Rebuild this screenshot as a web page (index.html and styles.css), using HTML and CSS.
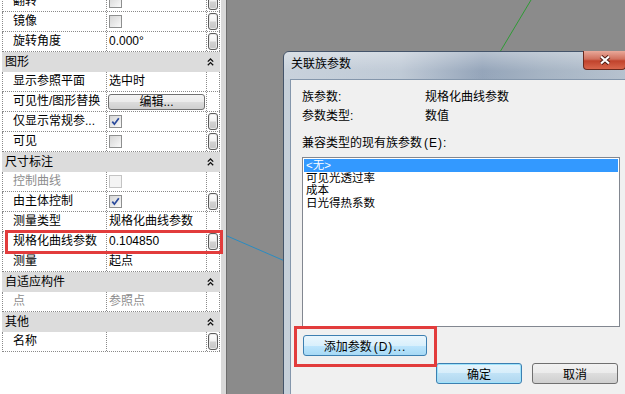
FILE: index.html
```html
<!DOCTYPE html>
<html lang="zh-CN">
<head>
  <meta charset="UTF-8" />
  <title>关联族参数</title>
  <link rel="stylesheet" href="styles.css">
</head>
<body>
<div class="screen">

  <aside class="props">
    <div class="props-list">
      <div class="row"><div class="name">翻转</div><div class="val"><span class="cb"></span></div><div class="link"><span class="cap"></span></div></div>
      <div class="row"><div class="name">镜像</div><div class="val"><span class="cb"></span></div><div class="link"><span class="cap"></span></div></div>
      <div class="row"><div class="name">旋转角度</div><div class="val">0.000°</div><div class="link"><span class="cap"></span></div></div>

      <div class="group"><span>图形</span><svg class="chev" width="7" height="8" viewBox="0 0 7 8"><polyline points="0.8,3.6 3.5,1 6.2,3.6" /><polyline points="0.8,7.2 3.5,4.6 6.2,7.2" /></svg></div>
      <div class="row"><div class="name">显示参照平面</div><div class="val">选中时</div><div class="link"></div></div>
      <div class="row"><div class="name">可见性/图形替换</div><div class="val"><button class="edit-btn">编辑...</button></div><div class="link"></div></div>
      <div class="row"><div class="name">仅显示常规参...</div><div class="val"><span class="cb"><svg width="11" height="11" viewBox="0 0 11 11"><path d="M2.3 5.6 L4.4 8.2 L8.8 2.2" /></svg></span></div><div class="link"><span class="cap"></span></div></div>
      <div class="row"><div class="name">可见</div><div class="val"><span class="cb"></span></div><div class="link"><span class="cap"></span></div></div>

      <div class="group"><span>尺寸标注</span><svg class="chev" width="7" height="8" viewBox="0 0 7 8"><polyline points="0.8,3.6 3.5,1 6.2,3.6" /><polyline points="0.8,7.2 3.5,4.6 6.2,7.2" /></svg></div>
      <div class="row off"><div class="name">控制曲线</div><div class="val"><span class="cb"></span></div><div class="link"></div></div>
      <div class="row"><div class="name">由主体控制</div><div class="val"><span class="cb"><svg width="11" height="11" viewBox="0 0 11 11"><path d="M2.3 5.6 L4.4 8.2 L8.8 2.2" /></svg></span></div><div class="link"><span class="cap"></span></div></div>
      <div class="row"><div class="name">测量类型</div><div class="val">规格化曲线参数</div><div class="link"></div></div>
      <div class="row"><div class="name">规格化曲线参数</div><div class="val">0.104850</div><div class="link"><span class="cap"></span></div></div>
      <div class="row"><div class="name">测量</div><div class="val">起点</div><div class="link"></div></div>

      <div class="group"><span>自适应构件</span><svg class="chev" width="7" height="8" viewBox="0 0 7 8"><polyline points="0.8,3.6 3.5,1 6.2,3.6" /><polyline points="0.8,7.2 3.5,4.6 6.2,7.2" /></svg></div>
      <div class="row off"><div class="name">点</div><div class="val">参照点</div><div class="link"></div></div>

      <div class="group"><span>其他</span><svg class="chev" width="7" height="8" viewBox="0 0 7 8"><polyline points="0.8,3.6 3.5,1 6.2,3.6" /><polyline points="0.8,7.2 3.5,4.6 6.2,7.2" /></svg></div>
      <div class="row"><div class="name">名称</div><div class="val"></div><div class="link"><span class="cap"></span></div></div>
    </div>
  </aside>

  <main class="view">
    <!-- modelo no fundo -->
    <svg class="lines" width="399" height="394" viewBox="0 0 399 394">
      <line x1="305" y1="0" x2="262" y2="72" stroke="#2f9a35" stroke-width="1" />
      <line x1="0" y1="235.5" x2="75" y2="268" stroke="#2a8cc2" stroke-width="1" />
    </svg>

    <div class="dialog">
      <div class="titlebar">
        <span class="title">关联族参数</span>
        <span class="close">
          <svg width="12" height="10" viewBox="0 0 12 10">
            <path d="M2 1.5 L10 8.5 M10 1.5 L2 8.5" stroke="#4a1a12" stroke-width="4" />
            <path d="M2 1.5 L10 8.5 M10 1.5 L2 8.5" stroke="#fff" stroke-width="2.2" />
          </svg>
        </span>
      </div>
      <div class="client">
        <div class="info">
          <span>族参数:</span><span>规格化曲线参数</span>
          <span>参数类型:</span><span>数值</span>
        </div>
        <div class="list-label">兼容类型的现有族参数<span class="key">(E)</span>:</div>
        <div class="listbox">
          <div class="item sel">&lt;无&gt;</div>
          <div class="item">可见光透过率</div>
          <div class="item">成本</div>
          <div class="item">日光得热系数</div>
        </div>
        <button class="btn btn-add">添加参数<span class="key">(D)...</span></button>
        <div class="actions">
          <button class="btn btn-ok">确定</button>
          <button class="btn">取消</button>
        </div>
      </div>
    </div>
  </main>

  <!-- marcações vermelhas -->
  <div class="mark mark-param"></div>
  <div class="mark mark-add"></div>
</div>
</body>
</html>
```

FILE: styles.css
```css
body {
  margin: 0;
  font-family: "Liberation Sans", "Noto Sans CJK SC", sans-serif;
  font-size: 12px;
  color: #000;
  overflow: hidden;
}

.screen {
  position: relative;
  display: flex;
  width: 625px;
  height: 394px;
  overflow: hidden;
  background: #8b8b8b;
}

/* painel de propriedades */
.props {
  flex: none;
  width: 221px;
  height: 100%;
  background: #fff;
  border-right: 5px solid #d9d9d9;
  box-shadow: 1px 0 0 #6c6c6c;
  position: relative;
  z-index: 1;
}

.props-list {
  margin-top: -8px;
  padding-left: 2px;
  width: 218px;
}

.row {
  display: grid;
  grid-template-columns: 104px 100px 13px;
  height: 20px;
  box-sizing: border-box;
  border-left: 1px dotted #8a8a8a;
  border-bottom: 1px dotted #8a8a8a;
  line-height: 19px;
}

.row > div {
  border-right: 1px dotted #8a8a8a;
  box-sizing: border-box;
  white-space: nowrap;
  overflow: hidden;
}

.name {
  padding-left: 10px;
}

.val {
  display: flex;
  align-items: center;
  padding-left: 2px;
}

.link {
  display: flex;
  align-items: center;
  justify-content: center;
}

.row.off .name,
.row.off .val {
  color: #8d8d8d;
}

.group {
  height: 20px;
  background: #dcdcdc;
  display: flex;
  align-items: center;
  justify-content: space-between;
  padding: 0 6px 0 3px;
  line-height: 20px;
}

.chev polyline {
  fill: none;
  stroke: #111;
  stroke-width: 1.3;
}

.cb {
  width: 13px;
  height: 13px;
  box-sizing: border-box;
  border: 1px solid #8e8f8f;
  background: linear-gradient(135deg, #d6d6d6, #f9f9f9);
  display: flex;
  align-items: center;
  justify-content: center;
}

.cb path {
  fill: none;
  stroke: #2a4a9c;
  stroke-width: 1.7;
}

.row.off .cb {
  border-color: #c4c4c4;
  background: #f4f4f4;
}

.cap {
  width: 10px;
  height: 17px;
  box-sizing: border-box;
  border: 1px solid #5c5c5c;
  border-radius: 3px;
  background: linear-gradient(#ffffff, #f3f3f3 45%, #d2d2d2 55%, #c6c6c6);
  box-shadow: inset 0 0 0 1px #e8e8e8;
}

.edit-btn {
  width: 97px;
  height: 16px;
  margin-left: -1px;
  padding: 0;
  border: 1px solid #707070;
  border-radius: 3px;
  background: linear-gradient(#f3f3f3, #ebebeb 50%, #dddddd 50%, #cfcfcf);
  font: inherit;
  line-height: 14px;
}

/* vista */
.view {
  flex: 1;
  position: relative;
}

.lines {
  position: absolute;
  top: 0;
  left: 0;
}

.dialog {
  position: absolute;
  left: 57px;
  top: 51px;
  width: 356px;
  height: 380px;
  box-sizing: border-box;
  border: 1px solid #44546a;
  border-radius: 6px 6px 0 0;
  padding: 0 6px;
  background: linear-gradient(to right, #c6d0da 0%, #bcc7d4 33%, #8fa0b6 56%, #a0afc0 72%, #b5c1ce 100%);
}

.titlebar {
  display: flex;
  justify-content: space-between;
  align-items: flex-start;
  height: 27px;
  margin: 0 -6px;
  padding: 0 6px;
  background: linear-gradient(rgba(255, 255, 255, 0.35), rgba(255, 255, 255, 0.05) 70%);
  border-radius: 5px 5px 0 0;
}

.title {
  line-height: 24px;
  padding-left: 1px;
}

.close {
  width: 43px;
  height: 19px;
  margin: -1px 6px 0 0;
  box-sizing: border-box;
  border: 1px solid #6b2a1e;
  border-top: none;
  border-radius: 0 0 4px 4px;
  background: linear-gradient(#e9a99a, #d0705d 45%, #c0432c 55%, #d8664c);
  display: flex;
  align-items: center;
  justify-content: center;
}

.client {
  height: 360px;
  box-sizing: border-box;
  border: 1px solid #8496ab;
  background: #f0f0f0;
  padding: 8px 11px 0;
}

.info {
  display: grid;
  grid-template-columns: 123px 1fr;
  line-height: 19px;
}

.list-label {
  margin-top: 10px;
  line-height: 14px;
}

.key {
  letter-spacing: 1px;
  margin-left: 2px;
}

.listbox {
  margin-top: 7px;
  height: 170px;
  box-sizing: border-box;
  border: 1px solid #828790;
  background: #fff;
  padding: 1px;
  font-size: 11.5px;
}

.item {
  height: 12.4px;
  line-height: 12.4px;
  padding-left: 2px;
}

.item.sel {
  height: 13px;
  line-height: 13px;
  background: #3399ff;
  color: #fff;
}

.btn {
  height: 21px;
  width: 86px;
  padding: 0;
  border: 1px solid #707070;
  border-radius: 3px;
  background: linear-gradient(#f2f2f2, #ebebeb 50%, #dddddd 50%, #cfcfcf);
  font: inherit;
  color: #000;
}

.btn-add {
  display: block;
  width: 124px;
  margin: 8px 0 0 1px;
  border-color: #3c7fb1;
  background: linear-gradient(#eaf6fd, #d9f0fc 50%, #bee6fd 50%, #a7d9f5);
}

.btn-ok {
  border-color: #3c7fb1;
  background: linear-gradient(#e5f4fc, #d6edfa 50%, #c0e2f6 50%, #b0d7ef);
  box-shadow: inset 0 0 0 1px #9fe3fb;
}

.actions {
  display: flex;
  justify-content: flex-end;
  gap: 10px;
  margin-top: 7px;
  padding-right: 2px;
}

/* marcações */
.mark {
  position: absolute;
  border: 3px solid #e23c3c;
  box-sizing: border-box;
  z-index: 5;
}

.mark-param {
  left: 5px;
  top: 230px;
  width: 218px;
  height: 24px;
}

.mark-add {
  left: 294px;
  top: 326px;
  width: 143px;
  height: 41px;
}
```
